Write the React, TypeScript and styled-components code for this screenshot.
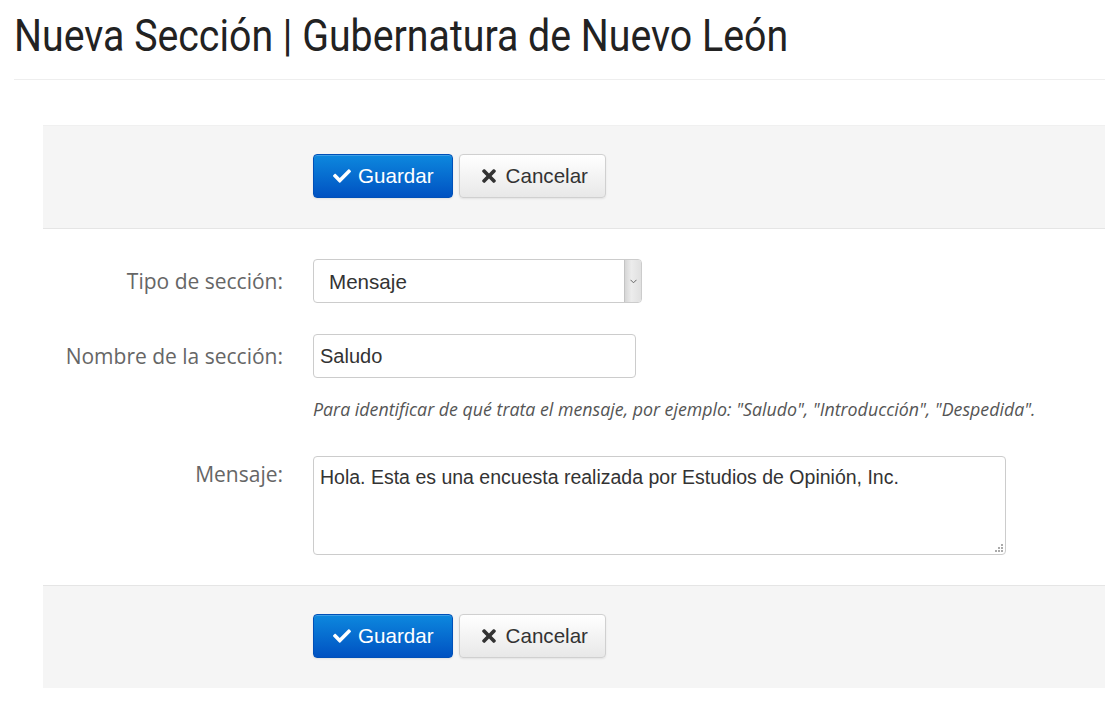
import * as React from "react";
import styled, { createGlobalStyle } from "styled-components";
import { FaCheck, FaTimes } from "react-icons/fa";

const GlobalStyle = createGlobalStyle`
  html, body {
    margin: 0;
    padding: 0;
    background: #fff;
  }
  body {
    font-family: "Liberation Sans", Arial, sans-serif;
    color: #333;
  }
`;

const Page = styled.div`
  padding: 0 0 16px 14px;
`;

const Header = styled.div`
  border-bottom: 1px solid #eee;
  height: 79px;
  overflow: hidden;
`;

const Title = styled.h1`
  display: inline-block;
  margin: 0;
  padding-top: 10px;
  font-family: Roboto, "Liberation Sans", sans-serif;
  font-weight: 400;
  font-size: 44px;
  line-height: 52px;
  color: #222;
  white-space: nowrap;
  transform: scaleX(0.893);
  transform-origin: left top;
`;

const Form = styled.form`
  margin: 45px 0 0 29px;
`;

const Actions = styled.div<{ $top?: boolean }>`
  display: flex;
  gap: 6px;
  padding: 28px 0 ${(p) => (p.$top ? "30px" : "29px")} 270px;
  background: #f5f5f5;
  border-top: 1px solid ${(p) => (p.$top ? "#f0f0f0" : "#e5e5e5")};
  border-bottom: 1px solid ${(p) => (p.$top ? "#e5e5e5" : "#f5f5f5")};
`;

const Button = styled.button<{ $primary?: boolean }>`
  display: inline-flex;
  align-items: center;
  gap: 7px;
  height: 44px;
  padding: 0 ${(p) => (p.$primary ? "18px" : "17px")} 0 19px;
  border-radius: 4px;
  font-family: "Liberation Sans", Arial, sans-serif;
  font-size: 20.6px;
  cursor: pointer;
  border: 1px solid ${(p) => (p.$primary ? "#0050b8" : "#d0d0d0")};
  color: ${(p) => (p.$primary ? "#fff" : "#333")};
  background: ${(p) =>
    p.$primary
      ? "linear-gradient(#0d88de, #0052c2)"
      : "linear-gradient(#ffffff, #e8e8e8)"};
  box-shadow: inset 0 1px 0 rgba(255, 255, 255, 0.2),
    0 1px 2px rgba(0, 0, 0, 0.08);
`;

const CheckIcon = styled(FaCheck)`
  font-size: 18px;
`;

const CrossIcon = styled(FaTimes)`
  font-size: 20px;
`;

const Fields = styled.div`
  display: flex;
  flex-direction: column;
  gap: 31px;
  padding: 30px 0 30px;
`;

const Row = styled.div`
  display: grid;
  grid-template-columns: 240px 1fr;
  column-gap: 30px;
  align-items: start;
`;

const Label = styled.label`
  text-align: right;
  font-family: "Open Sans", sans-serif;
  font-size: 21px;
  line-height: 28px;
  padding-top: 8px;
  color: #666;
`;

const Control = styled.div`
  display: flex;
  flex-direction: column;
`;

const SelectWrap = styled.div`
  position: relative;
  width: 329px;
`;

const Select = styled.select`
  appearance: none;
  width: 100%;
  height: 44px;
  padding: 0 0 0 15px;
  border: 1px solid #ccc;
  border-radius: 4px;
  background: #fff;
  font-family: "Liberation Sans", Arial, sans-serif;
  font-size: 20.6px;
  color: #333;
`;

const Arrow = styled.span`
  position: absolute;
  top: 1px;
  right: 1px;
  bottom: 1px;
  width: 16px;
  display: flex;
  align-items: center;
  justify-content: center;
  background: linear-gradient(90deg, #d6d6d6, #ececec 40%, #e0e0e0);
  border-left: 1px solid #c4c4c4;
  border-radius: 0 3px 3px 0;
  pointer-events: none;
`;

const Input = styled.input`
  box-sizing: border-box;
  width: 323px;
  height: 44px;
  padding: 0 6px;
  border: 1px solid #ccc;
  border-radius: 4px;
  font-family: "Liberation Sans", Arial, sans-serif;
  font-size: 20px;
  color: #333;
`;

const Help = styled.p`
  margin: 19px 0 0;
  font-family: "Open Sans", sans-serif;
  font-style: italic;
  font-size: 17.8px;
  line-height: 24px;
  color: #555;
  white-space: nowrap;
`;

const AreaWrap = styled.div`
  position: relative;
  width: 693px;
  margin-top: 4px;
`;

const TextArea = styled.textarea`
  display: block;
  box-sizing: border-box;
  width: 100%;
  height: 99px;
  padding: 7px 6px;
  border: 1px solid #ccc;
  border-radius: 4px;
  font-family: "Liberation Sans", Arial, sans-serif;
  font-size: 19.5px;
  line-height: 26px;
  color: #333;
  resize: none;
`;

const Grip = styled.svg`
  position: absolute;
  right: 3px;
  bottom: 3px;
`;

const App = () => {
  const buttons = (
    <>
      <Button type="button" $primary>
        <CheckIcon />
        Guardar
      </Button>
      <Button type="button">
        <CrossIcon />
        Cancelar
      </Button>
    </>
  );
  return (
    <Page>
      <GlobalStyle />
      <Header>
        <Title>Nueva Sección | Gubernatura de Nuevo León</Title>
      </Header>
      <Form>
        <Actions $top>{buttons}</Actions>
        <Fields>
          <Row>
            <Label>Tipo de sección:</Label>
            <Control>
              <SelectWrap>
                <Select defaultValue="mensaje">
                  <option value="mensaje">Mensaje</option>
                  <option value="pregunta">Pregunta</option>
                </Select>
                <Arrow>
                  <svg width="7" height="5" viewBox="0 0 7 5">
                    <path d="M0.5 0.8 L3.5 3.8 L6.5 0.8" fill="none" stroke="#666" strokeWidth="1" />
                  </svg>
                </Arrow>
              </SelectWrap>
            </Control>
          </Row>
          <Row>
            <Label>Nombre de la sección:</Label>
            <Control>
              <Input defaultValue="Saludo" />
              <Help>
                Para identificar de qué trata el mensaje, por ejemplo: "Saludo", "Introducción", "Despedida".
              </Help>
            </Control>
          </Row>
          <Row>
            <Label>Mensaje:</Label>
            <Control>
              <AreaWrap>
                <TextArea defaultValue="Hola. Esta es una encuesta realizada por Estudios de Opinión, Inc." />
                <Grip width="8" height="8" viewBox="0 0 8 8">
                  <g fill="#aaa">
                    <rect x="6" y="0" width="2" height="2" />
                    <rect x="3" y="3" width="2" height="2" />
                    <rect x="6" y="3" width="2" height="2" />
                    <rect x="0" y="6" width="2" height="2" />
                    <rect x="3" y="6" width="2" height="2" />
                    <rect x="6" y="6" width="2" height="2" />
                  </g>
                </Grip>
              </AreaWrap>
            </Control>
          </Row>
        </Fields>
        <Actions>{buttons}</Actions>
      </Form>
    </Page>
  );
};

export default App;
